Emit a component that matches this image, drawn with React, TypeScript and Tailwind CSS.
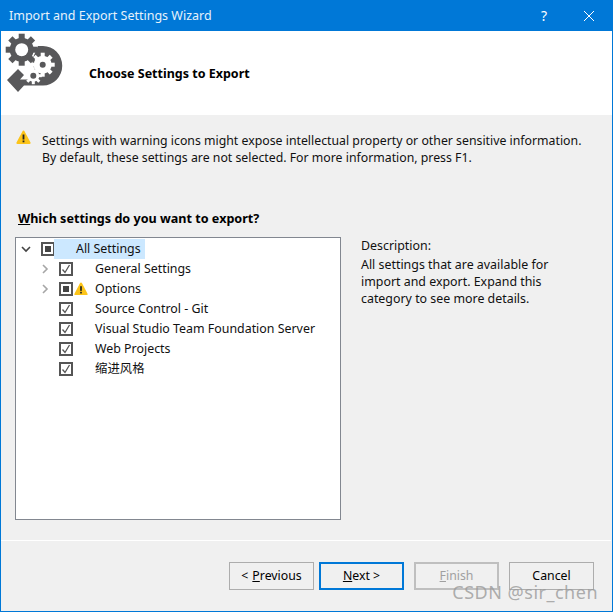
const FONT = "font-['Noto_Sans','Noto_Sans_CJK_SC',sans-serif]"

function Gear({ cx, cy, r, tooth, toothW, hole, fill, holeFill }: { cx: number; cy: number; r: number; tooth: number; toothW: number; hole: number; fill: string; holeFill: string }) {
  return (
    <g fill={fill}>
      {[0, 45, 90, 135].map((a) => (
        <rect key={a} x={cx - toothW / 2} y={cy - tooth} width={toothW} height={tooth * 2} transform={`rotate(${a} ${cx} ${cy})`} />
      ))}
      <circle cx={cx} cy={cy} r={r} />
      <circle cx={cx} cy={cy} r={hole} fill={holeFill} />
    </g>
  )
}

function GearArrow() {
  return (
    <svg width="60" height="62" viewBox="5 31 60 62" className="shrink-0">
      <path d="M43 46 A19 19.5 0 0 1 43 85.5 H24 L18 92 L7 80 L18 69 L24 75 L20 79.5 H36 L32 60 L38 46Z" fill="#58585a" />
      <Gear cx={42.7} cy={64.7} r={9} tooth={12} toothW={4} hole={3} fill="#fff" holeFill="#58585a" />
      <Gear cx={33.3} cy={75.7} r={6} tooth={8.5} toothW={3} hole={3} fill="#fff" holeFill="#58585a" />
      <Gear cx={21.7} cy={49.7} r={12} tooth={16} toothW={6} hole={6.5} fill="#58585a" holeFill="#fff" />
    </svg>
  )
}

function Warning({ size = 15 }: { size?: number }) {
  return (
    <svg width={size} height={size} viewBox="0 0 15 15" className="shrink-0">
      <path d="M7.5 0.5 C8 0.5 8.3 0.8 8.5 1.2 L14.5 12.6 C14.9 13.4 14.4 14 13.6 14 H1.4 C0.6 14 0.1 13.4 0.5 12.6 L6.5 1.2 C6.7 0.8 7 0.5 7.5 0.5Z" fill="#fcc419" />
      <rect x="6.6" y="4.5" width="1.8" height="5" fill="#222" />
      <rect x="6.6" y="10.5" width="1.8" height="1.8" fill="#222" />
    </svg>
  )
}

function Check({ state }: { state: "checked" | "mixed" }) {
  return (
    <span className="w-[14px] h-[14px] border-2 border-[#555] bg-white flex items-center justify-center shrink-0">
      {state === "mixed" ? (
        <span className="w-[6px] h-[6px] bg-[#444]" />
      ) : (
        <svg width="10" height="10" viewBox="0 0 10 10" fill="none" stroke="#555" strokeWidth="1.3">
          <path d="M1.5 5.5 L4 8.5 L8.5 1" />
        </svg>
      )}
    </span>
  )
}

function Chevron({ open }: { open?: boolean }) {
  return (
    <svg width="10" height="10" viewBox="0 0 10 10" fill="none" stroke={open ? "#444" : "#a6a6a6"} strokeWidth="1.6" className="shrink-0">
      {open ? <path d="M1 3 L5 7 L9 3" /> : <path d="M3 1 L7 5 L3 9" />}
    </svg>
  )
}

const rows = [
  { label: "General Settings", arrow: true },
  { label: "Options", arrow: true, mixed: true },
  { label: "Source Control - Git" },
  { label: "Visual Studio Team Foundation Server" },
  { label: "Web Projects" },
  { label: "缩进风格" },
]

function WizardButton({ children, variant }: { children: React.ReactNode; variant?: "primary" | "disabled" }) {
  const cls =
    variant === "primary"
      ? "border-2 border-[#0078d7] text-black"
      : variant === "disabled"
        ? "border-2 border-[#bfbfbf] text-[#a0a0a0]"
        : "border border-[#adadad] text-black"
  return <div className={`w-[85px] h-[28px] flex items-center justify-center bg-[#f0f0f0] ${cls}`}>{children}</div>
}

export default function App() {
  return (
    <div className={`${FONT} relative w-[613px] h-[612px] overflow-hidden flex flex-col bg-[#f0f0f0] border-x border-b border-[#0078d7] text-[12.3px] leading-[16px] text-[#111]`}>
      <div className="h-[31px] -mx-px bg-[#0078d7] text-white flex items-center justify-between pl-[9px] pr-[19px] shrink-0">
        <span className="text-[12.5px] text-[#e6f2fb]">Import and Export Settings Wizard</span>
        <div className="flex items-center gap-[37px]">
          <span className="text-[14px]">?</span>
          <svg width="10" height="10" viewBox="0 0 10 10" stroke="#fff" strokeWidth="1"><path d="M0 0 L10 10 M10 0 L0 10" /></svg>
        </div>
      </div>

      <div className="h-[84px] bg-white flex items-start pl-[4px] shrink-0">
        <GearArrow />
        <p className="ml-[24px] mt-[35px] font-bold text-[12.5px] text-black">Choose Settings to Export</p>
      </div>

      <div className="flex-1 flex flex-col pl-[14px] pr-[15px]">
        <div className="flex items-start mt-[15px] ml-[1px]">
          <Warning />
          <p className="ml-[11px] mt-[3px] whitespace-nowrap">
            Settings with warning icons might expose intellectual property or other sensitive information.
            <br />
            <span className="relative top-px">By default, these settings are not selected. For more information, press F1.</span>
          </p>
        </div>

        <p className="mt-[46px] mb-[-1px] ml-[3px] font-bold text-[12.6px] text-black">
          <span className="underline">W</span>hich settings do you want to export?
        </p>

        <div className="flex mt-[11px]">
          <div className="w-[326px] h-[283px] bg-white border border-[#828790] pt-px shrink-0 text-[12.4px]">
            <div className="h-[20px] flex items-center">
              <span className="ml-[5px] w-[10px] flex"><Chevron open /></span>
              <span className="ml-[10px]"><Check state="mixed" /></span>
              <span className="ml-[-1px] pl-[22px] pr-[4px] h-[20px] bg-[#cce8ff] flex items-center">All Settings</span>
            </div>
            {rows.map((row) => (
              <div key={row.label} className="h-[20px] flex items-center">
                <span className="ml-[24px] w-[10px] flex">{row.arrow && <Chevron />}</span>
                <span className="ml-[9px]"><Check state={row.mixed ? "mixed" : "checked"} /></span>
                <span className="w-[15px] ml-px flex">{row.mixed && <Warning size={14} />}</span>
                <span className="ml-[6px] whitespace-nowrap">{row.label}</span>
              </div>
            ))}
          </div>
          <div className="ml-[20px] leading-[17px] text-[12.4px]">
            <p>Description:</p>
            <p className="mt-[2px] w-[210px]">All settings that are available for import and export. Expand this category to see more details.</p>
          </div>
        </div>

        <div className="-mx-[14px] mt-[20px] h-px bg-white" />

        <div className="flex justify-end mt-[21px] pr-[3px]">
          <WizardButton>&lt; <span className="underline ml-1">P</span>revious</WizardButton>
          <div className="ml-[5px]">
            <WizardButton variant="primary"><span className="underline">N</span>ext &gt;</WizardButton>
          </div>
          <div className="ml-[10px]">
            <WizardButton variant="disabled"><span className="underline">F</span>inish</WizardButton>
          </div>
          <div className="ml-[10px]">
            <WizardButton>Cancel</WizardButton>
          </div>
        </div>
      </div>

      <span className="absolute right-[14px] bottom-[11px] text-[18px] text-[#9a9a9a]/80 tracking-[0.5px]">CSDN @sir_chen</span>
    </div>
  )
}
